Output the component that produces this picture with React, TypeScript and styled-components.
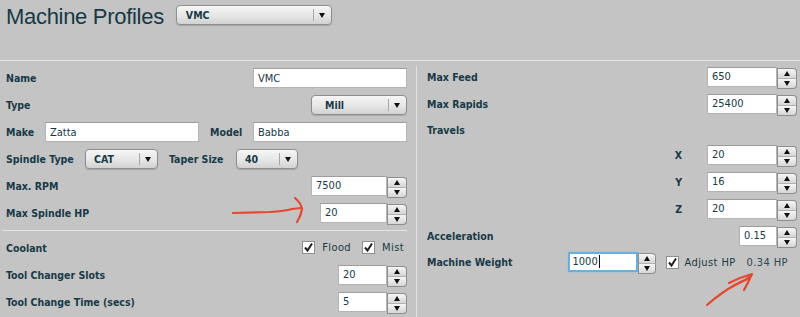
import React from "react";
import styled, { createGlobalStyle, css } from "styled-components";

const GlobalStyle = createGlobalStyle`
  html, body { margin: 0; padding: 0; background: #c4c4c4; }
  body { font-family: "DejaVu Sans Condensed", "DejaVu Sans", sans-serif; color: #173a47; }
  * { box-sizing: border-box; }
`;

const Page = styled.div`
  position: relative;
  width: 800px;
  height: 317px;
  overflow: hidden;
  background: #c4c4c4;
`;

const Header = styled.header`
  height: 61px;
  display: flex;
  align-items: flex-start;
  gap: 12px;
  padding: 5px 6px 0 6px;
  border-bottom: 1px solid #e6e6e6;
`;

const Title = styled.h1`
  margin: 0;
  font-family: "Liberation Sans", "Open Sans", sans-serif;
  font-weight: normal;
  font-size: 22px;
  letter-spacing: -0.3px;
  line-height: 24px;
  color: #163944;
`;

const Body = styled.div`
  display: flex;
  height: 256px;
`;

const LeftPanel = styled.section`
  width: 417px;
  padding: 2px 9px 0 6px;
  border-right: 1px solid #e2e2e2;
  margin-top: 5px;
`;

const RightPanel = styled.section`
  flex: 1;
  padding: 6px 3px 0 10px;
`;

const Row = styled.div<{ $h?: number; $gap?: number }>`
  display: flex;
  align-items: center;
  height: ${(p) => p.$h ?? 20}px;
  margin-bottom: ${(p) => p.$gap ?? 7}px;
`;

const Label = styled.span<{ $w?: number }>`
  font-weight: bold;
  font-size: 10.5px;
  color: #173a47;
  white-space: nowrap;
  ${(p) => (p.$w ? css`width: ${p.$w}px;` : "")}
`;

const AxisLabel = styled(Label)`
  margin-right: 25px;
`;

const Spacer = styled.div<{ $w?: number }>`
  ${(p) => (p.$w ? css`width: ${p.$w}px;` : css`flex: 1;`)}
`;

const Separator = styled.hr`
  border: 0;
  border-top: 1px solid #e6e6e6;
  margin: 0 0 6px -3px;
  height: 0;
`;

const TextInput = styled.div<{ $w: number; $focused?: boolean }>`
  width: ${(p) => p.$w}px;
  height: 20px;
  background: #fff;
  border: 1px solid #b4b4b4;
  border-top-color: #9c9c9c;
  display: flex;
  align-items: center;
  padding-left: 4px;
  font-size: 11px;
  color: #173a47;
  ${(p) =>
    p.$focused &&
    css`
      border: 2px solid #6aaee0;
      padding-left: 3px;
      box-shadow: 0 0 2px #8cc4ee;
    `}
`;

const Caret = styled.span`
  display: inline-block;
  width: 1px;
  height: 13px;
  background: #111;
  margin-left: 1px;
`;

const SelectBox = styled.div<{ $w: number }>`
  width: ${(p) => p.$w}px;
  height: 20px;
  border: 1px solid #8e8e8e;
  border-radius: 4px;
  background: linear-gradient(#f6f6f6, #e6e6e6 55%, #d2d2d2);
  box-shadow: 0 1px 1px rgba(0, 0, 0, 0.15);
  display: flex;
  align-items: stretch;
`;

const SelectText = styled.span<{ $pad: number }>`
  flex: 1;
  display: flex;
  align-items: center;
  padding-left: ${(p) => p.$pad}px;
  font-weight: bold;
  font-size: 10.5px;
  color: #173a47;
`;

const SelectArrow = styled.span`
  width: 18px;
  display: flex;
  align-items: center;
  justify-content: center;
  position: relative;
  &::before {
    content: "";
    position: absolute;
    left: 0;
    top: 3px;
    bottom: 3px;
    border-left: 1px solid #a8a8a8;
  }
`;

const TriDown = styled.span`
  width: 0;
  height: 0;
  border-left: 3.5px solid transparent;
  border-right: 3.5px solid transparent;
  border-top: 5px solid #111;
`;

const TriUp = styled.span`
  width: 0;
  height: 0;
  border-left: 3.5px solid transparent;
  border-right: 3.5px solid transparent;
  border-bottom: 5px solid #111;
`;

const SpinnerCol = styled.div<{ $w: number }>`
  width: ${(p) => p.$w}px;
  height: 21px;
  display: flex;
  flex-direction: column;
  margin-top: 1px;
`;

const SpinBtn = styled.div<{ $top?: boolean }>`
  flex: 1;
  display: flex;
  align-items: center;
  justify-content: center;
  border: 1px solid #8e8e8e;
  background: linear-gradient(#f6f6f6, #d6d6d6);
  ${(p) =>
    p.$top
      ? css`
          border-radius: 0 4px 0 0;
          border-bottom-color: #b0b0b0;
        `
      : css`
          border-radius: 0 0 4px 0;
          border-top: 0;
        `}
`;

const NumWrap = styled.div`
  display: flex;
  align-items: flex-start;
  height: 21px;
`;

const CheckBox = styled.span`
  width: 13px;
  height: 13px;
  background: #fff;
  border: 1px solid #8e8e8e;
  display: inline-flex;
  align-items: center;
  justify-content: center;
`;

const CheckText = styled.span<{ $color?: string; $ml?: number; $mr?: number }>`
  font-size: 11px;
  letter-spacing: 0.4px;
  color: ${(p) => p.$color ?? "#173a47"};
  margin: 0 ${(p) => p.$mr ?? 10}px 0 ${(p) => p.$ml ?? 8}px;
  white-space: nowrap;
`;

const Annotations = styled.svg`
  position: absolute;
  left: 0;
  top: 0;
  pointer-events: none;
`;

function Select({ w, value, pad = 8 }: { w: number; value: string; pad?: number }) {
  return (
    <SelectBox $w={w}>
      <SelectText $pad={pad}>{value}</SelectText>
      <SelectArrow>
        <TriDown />
      </SelectArrow>
    </SelectBox>
  );
}

function NumberField({
  w,
  value,
  focused,
  sw = 20,
}: {
  w: number;
  value: string;
  focused?: boolean;
  sw?: number;
}) {
  return (
    <NumWrap>
      <TextInput $w={w} $focused={focused}>
        {value}
        {focused && <Caret />}
      </TextInput>
      <SpinnerCol $w={sw}>
        <SpinBtn $top>
          <TriUp />
        </SpinBtn>
        <SpinBtn>
          <TriDown />
        </SpinBtn>
      </SpinnerCol>
    </NumWrap>
  );
}

function Tick() {
  return (
    <CheckBox>
      <svg width="11" height="11" viewBox="0 0 11 11">
        <path d="M2 5.5 L4.5 8.5 L9 1.5" fill="none" stroke="#222" strokeWidth="2" />
      </svg>
    </CheckBox>
  );
}

export default function App() {
  return (
    <>
      <GlobalStyle />
      <Page>
        <Header>
          <Title>Machine Profiles</Title>
          <Select w={156} value="VMC" pad={9} />
        </Header>
        <Body>
          <LeftPanel>
            <Row>
              <Label>Name</Label>
              <Spacer />
              <TextInput $w={154}>VMC</TextInput>
            </Row>
            <Row>
              <Label>Type</Label>
              <Spacer />
              <Select w={96} value="Mill" pad={13} />
            </Row>
            <Row>
              <Label $w={39}>Make</Label>
              <TextInput $w={154}>Zatta</TextInput>
              <Spacer />
              <Label $w={43}>Model</Label>
              <TextInput $w={154}>Babba</TextInput>
            </Row>
            <Row>
              <Label $w={79}>Spindle Type</Label>
              <Select w={73} value="CAT" />
              <Spacer $w={11} />
              <Label $w={67}>Taper Size</Label>
              <Select w={62} value="40" />
            </Row>
            <Row>
              <Label>Max. RPM</Label>
              <Spacer />
              <NumberField w={76} value="7500" />
            </Row>
            <Row>
              <Label>Max Spindle HP</Label>
              <Spacer />
              <NumberField w={67} value="20" />
            </Row>
            <Separator />
            <Row $h={21}>
              <Label>Coolant</Label>
              <Spacer />
              <Tick />
              <CheckText $ml={7} $mr={11}>Flood</CheckText>
              <Tick />
              <CheckText $ml={7} $mr={3}>Mist</CheckText>
            </Row>
            <Row>
              <Label>Tool Changer Slots</Label>
              <Spacer />
              <NumberField w={49} value="20" />
            </Row>
            <Row>
              <Label>Tool Change Time (secs)</Label>
              <Spacer />
              <NumberField w={49} value="5" />
            </Row>
          </LeftPanel>
          <RightPanel>
            <Row>
              <Label>Max Feed</Label>
              <Spacer />
              <NumberField w={70} value="650" />
            </Row>
            <Row>
              <Label>Max Rapids</Label>
              <Spacer />
              <NumberField w={70} value="25400" />
            </Row>
            <Row $h={17}>
              <Label>Travels</Label>
            </Row>
            <Row>
              <Spacer />
              <AxisLabel>X</AxisLabel>
              <NumberField w={70} value="20" />
            </Row>
            <Row>
              <Spacer />
              <AxisLabel>Y</AxisLabel>
              <NumberField w={70} value="16" />
            </Row>
            <Row>
              <Spacer />
              <AxisLabel>Z</AxisLabel>
              <NumberField w={70} value="20" />
            </Row>
            <Row $gap={6}>
              <Label>Acceleration</Label>
              <Spacer />
              <NumberField w={38} value="0.15" />
            </Row>
            <Row>
              <Label>Machine Weight</Label>
              <Spacer />
              <NumberField w={70} value="1000" focused sw={18} />
              <Spacer $w={10} />
              <Tick />
              <CheckText $ml={6} $mr={11}>Adjust HP</CheckText>
              <CheckText $color="#2c4852" $ml={0} $mr={9}>0.34 HP</CheckText>
            </Row>
          </RightPanel>
        </Body>
        <Annotations width="800" height="317" viewBox="0 0 800 317">
          <g fill="none" stroke="#e5482e" strokeWidth="2.2" strokeLinecap="round" strokeLinejoin="round">
            <path d="M233 213 L270 212 Q285 211 292 209 L301 208" />
            <path d="M295 198 Q301 203 302 209 Q301 216 297 222" />
            <path d="M707 305 Q722 292 735 285 Q744 281 749 277" />
            <path d="M729 283 Q741 277 752 274 Q748 283 744 290" />
            <path d="M733 286 Q742 281 748 279" />
          </g>
        </Annotations>
      </Page>
    </>
  );
}
